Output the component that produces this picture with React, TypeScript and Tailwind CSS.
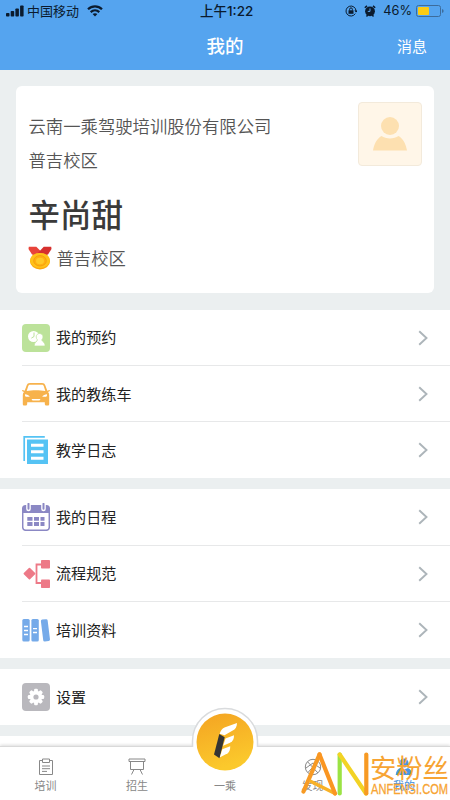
import type { ReactNode } from 'react';

interface MenuItem {
  label: string;
  icon: ReactNode;
}

const AppointmentIcon = () => (
  <svg className="w-7 h-7" viewBox="0 0 28 28">
    <rect width="28" height="28" rx="4" fill="#bce29a" />
    <circle cx="11.6" cy="12.500" r="5.6" fill="#fff" />
    <path d="M12 8.500v4l-2.600 1.600" fill="none" stroke="#bce29a" strokeWidth="1" />
    <path
      d="M17.500 9.500c2.200 0 3.500 1.500 3.500 3.500 0 1.200-.6 2.100-1.200 2.800.2 2 3.200 2 3.300 6.200H12.200c.1-4 3-4.200 3.200-6.200-.7-.7-1.200-1.600-1.200-2.800C14.200 11 15.400 9.500 17.500 9.500z"
      fill="#fff"
      stroke="#bce29a"
      strokeWidth="0.7"
    />
  </svg>
);

const CarIcon = () => (
  <svg className="w-7 h-7" viewBox="0 0 28 28">
    <path
      d="M8 3h12c1.800 0 2.800.8 3.400 2.500l1.900 5.300 2-.8c.6-.2.900.9.300 1.200l-1.600.9c.8.800 1.200 1.700 1.200 2.900v9c0 1-.6 1.500-1.500 1.500h-1.400c-.9 0-1.500-.6-1.500-1.500v-1.800H5.200V24c0 .9-.6 1.500-1.500 1.500H2.300c-.9 0-1.500-.5-1.500-1.500v-9c0-1.200.4-2.100 1.200-2.900l-1.600-.9c-.6-.3-.3-1.400.3-1.200l2 .8 1.900-5.300C5.200 3.800 6.200 3 8 3z"
      fill="#f7b24c"
    />
    <path d="M8.200 4.800h11.600c1 0 1.600.4 1.900 1.300l1.600 4.900c-5-.9-13.600-.9-18.600 0l1.600-4.900c.3-.9.900-1.300 1.900-1.300z" fill="#fff" />
    <path d="M3 14.200c2 .2 4 .9 4.800 2.600H4.500C3.300 16.800 2.800 15.600 3 14.200zM25 14.200c-2 .2-4 .9-4.800 2.600h3.300c1.200 0 1.700-1.200 1.500-2.600zM9.500 19h9l-1 1.500h-7z" fill="#fff" />
  </svg>
);

const LogIcon = () => (
  <svg className="w-7 h-7" viewBox="0 0 28 28">
    <path d="M2.200 25V.900h20.600" fill="none" stroke="#55c3f4" strokeWidth="1.700" />
    <rect x="5" y="3.500" width="21" height="25" fill="#55c3f4" />
    <path d="M9 9.200h12.500M9 15.700h12.500M9 22.300h12.500" stroke="#fff" strokeWidth="3" />
  </svg>
);

const CalendarIcon = () => (
  <svg className="w-7 h-7" viewBox="0 0 28 28">
    <rect x="0.700" y="2.700" width="26.600" height="24.600" rx="3" fill="#fff" stroke="#8b88c4" strokeWidth="1.500" />
    <path d="M1 10V5.500C1 3.500 2 2.500 4 2.500h20c2 0 3 1 3 3V10z" fill="#8b88c4" />
    <path d="M6.500 2v4M21.500 2v4" stroke="#fff" strokeWidth="4.600" strokeLinecap="round" />
    <path d="M6.500 .8v5M21.500 .8v5" stroke="#8b88c4" strokeWidth="2" strokeLinecap="round" />
    <path d="M5.300 15.800h5.200M12 15.800h5M18.500 15.800h4M5.300 21h5.200M12 21h5M18.500 21h4" stroke="#8b88c4" strokeWidth="3.800" />
  </svg>
);

const FlowIcon = () => (
  <svg className="w-7 h-7" viewBox="0 0 28 28">
    <rect x="3" y="9.200" width="8.800" height="8.800" rx="0.800" transform="rotate(45 7.400 13.700)" fill="#ed7987" />
    <path d="M19 4.500h-4.500V23H19" fill="none" stroke="#ed7987" strokeWidth="1.800" />
    <rect x="19" y="0" width="9" height="8.500" rx="0.800" fill="#ed7987" />
    <rect x="19" y="19.500" width="9" height="8.500" rx="0.800" fill="#ed7987" />
  </svg>
);

const BooksIcon = () => (
  <svg className="w-7 h-7" viewBox="0 0 28 28">
    <g fill="#75aae9">
      <rect x="0.300" y="3" width="7.400" height="22.500" rx="1.500" />
      <rect x="9.400" y="3" width="7.400" height="22.500" rx="1.500" />
      <rect x="20" y="3.300" width="6.800" height="22" rx="1.500" transform="rotate(-7 23.400 14)" />
    </g>
    <path d="M2 10.500h4M2 14.500h4M2 18.500h4M11 12.600h4M11 16.500h4" stroke="#fff" strokeWidth="1.300" />
  </svg>
);

const teeth = [0, 45, 90, 135, 180, 225, 270, 315];

const SettingsIcon = () => (
  <svg className="w-7 h-7" viewBox="0 0 28 28">
    <rect width="28" height="28" rx="4" fill="#b9b8bd" />
    <g fill="#fff">
      {teeth.map((angle) => (
        <rect key={angle} x="12.100" y="5.800" width="3.800" height="5" rx="1.200" transform={`rotate(${angle} 14 14)`} />
      ))}
      <circle cx="14" cy="14" r="6.200" />
    </g>
    <circle cx="14" cy="14" r="2.600" fill="#b9b8bd" />
  </svg>
);

const groups: MenuItem[][] = [
  [
    { label: '我的预约', icon: <AppointmentIcon /> },
    { label: '我的教练车', icon: <CarIcon /> },
    { label: '教学日志', icon: <LogIcon /> },
  ],
  [
    { label: '我的日程', icon: <CalendarIcon /> },
    { label: '流程规范', icon: <FlowIcon /> },
    { label: '培训资料', icon: <BooksIcon /> },
  ],
  [{ label: '设置', icon: <SettingsIcon /> }],
];

const StatusBar = () => (
  <div className="relative flex h-[22px] items-center justify-between pl-1.5 pr-1.5 text-[13px] text-[#0b1b2e]">
    <div className="flex items-center">
      <svg className="w-[18px] h-3 mr-[3px]" viewBox="0 0 18 12" fill="#0b1b2e">
        <rect x="0" y="8" width="3.500" height="3.500" rx="0.800" />
        <rect x="4.700" y="6" width="3.500" height="5.500" rx="0.800" />
        <rect x="9.400" y="3.500" width="3.500" height="8" rx="0.800" />
        <rect x="14.100" y="0.500" width="3.500" height="11" rx="0.800" />
      </svg>
      <span>中国移动</span>
      <svg className="w-4 h-3 ml-2" viewBox="0 0 16 12" fill="none" stroke="#0b1b2e" strokeWidth="2.200">
        <path d="M1 4.300c4-3.900 10-3.900 14 0M3.700 7.100c2.500-2.300 6.100-2.300 8.600 0" />
        <path d="M5.600 9.100c1.400-1.200 3.400-1.200 4.800 0L8 11.600z" fill="#0b1b2e" stroke="none" />
      </svg>
    </div>
    <span className="absolute left-[200px] whitespace-nowrap font-['Inter','Noto_Sans_CJK_SC',sans-serif] text-[13.500px] font-medium">上午1:22</span>
    <div className="flex items-center">
      <svg className="w-3 h-3" viewBox="0 0 12 12" fill="none" stroke="#0b1b2e">
        <path d="M10.300 8.600A5 5 0 1 1 11 6" />
        <path d="M9.300 5.500h3.200L11 7.600z" fill="#0b1b2e" stroke="none" />
        <rect x="3.500" y="5.300" width="5" height="3.500" fill="#0b1b2e" stroke="none" />
        <path d="M4.600 5.500V4.300a1.400 1.400 0 0 1 2.800 0v1.200" />
      </svg>
      <svg className="w-3 h-3 ml-[7px]" viewBox="0 0 12 12">
        <path d="M.8 2.800 3 .9M11.200 2.800 9 .9M2.500 11.500l1.300-1.600M9.500 11.500 8.200 9.900" stroke="#0b1b2e" strokeWidth="1.500" />
        <circle cx="6" cy="6.300" r="4.900" fill="#0b1b2e" />
        <path d="M6 3.400v3H3.800" fill="none" stroke="#55a4ef" />
      </svg>
      <span className="ml-[7px] font-['Inter',sans-serif] text-[12.800px]">46%</span>
      <svg className="w-7 h-3 ml-1" viewBox="0 0 28 12">
        <rect x="0.500" y="0.500" width="24" height="11" rx="2" fill="none" stroke="#3d6c9b" />
        <rect x="2" y="2" width="11" height="8" rx="0.800" fill="#fbcb13" />
        <path d="M26 4v4c1.200-.5 1.600-1.100 1.600-2S27.200 4.500 26 4z" fill="#3d6c9b" />
      </svg>
    </div>
  </div>
);

const Medal = () => (
  <svg className="-ml-px w-6 h-6" viewBox="0 0 24 24">
    <path d="M.8.800h7.500l4.500 4.500L9 10 4 8.500.5 3z" fill="#e8443a" />
    <path d="M23.200.800h-7.500L9.500 7.500 15 10l5-1.500L23.500 3z" fill="#d6302e" />
    <ellipse cx="12" cy="15.200" rx="10" ry="8.300" fill="#fba70d" />
    <ellipse cx="12" cy="14.400" rx="10" ry="7.500" fill="#ffc21a" />
    <ellipse cx="12" cy="14.800" rx="6.300" ry="5.200" fill="#ffb012" stroke="#f39b0b" strokeWidth="0.800" />
    <ellipse cx="12" cy="15" rx="4" ry="3.300" fill="#ffc928" />
  </svg>
);

const ProfileCard = () => (
  <div className="mx-4 mt-4 flex h-[207px] justify-between rounded-md bg-white pl-[12.500px] pr-3 pt-4">
    <div className="pt-[11px] text-[17.350px] font-[350] leading-[26px] text-[#555]">
      <p>云南一乘驾驶培训股份有限公司</p>
      <p className="mt-2">普吉校区</p>
      <h1 className="mt-[18px] text-[31.500px] font-medium leading-[44px] text-[#3a3a3a]">辛尚甜</h1>
      <div className="mt-2.5 flex items-center">
        <Medal />
        <span className="ml-[5px]">普吉校区</span>
      </div>
    </div>
    <div className="flex h-16 w-16 justify-center rounded border border-[#f3eadb] bg-[#fff6e8] pt-3.5">
      <svg className="w-[34px] h-[34px]" viewBox="0 0 34 34" fill="#fde0b0">
        <circle cx="17" cy="9" r="9" />
        <path d="M8.500 19c4.500 3.200 12.500 3.200 17 0 4.500 2.500 7.500 8 8.500 14.600H0C1 27 4 21.500 8.500 19z" />
      </svg>
    </div>
  </div>
);

const MenuGroup = ({ items }: { items: MenuItem[] }) => (
  <div className="bg-white">
    {items.map((item, i) => (
      <div key={item.label} className="flex h-[56.250px] items-center pl-[22px]">
        {item.icon}
        <div
          className={`ml-1.5 flex h-full flex-1 items-center justify-between pr-[22px] ${
            i > 0 ? 'relative before:absolute before:-top-px before:-left-[34px] before:right-0 before:h-px before:bg-[#e7e8e9]' : ''
          }`}
        >
          <span className="-mt-0.5 text-[15.100px] text-[#222]">{item.label}</span>
          <svg className="w-2.5 h-4" viewBox="0 0 10 16" fill="none" stroke="#adb5ba" strokeWidth="1.900">
            <path d="M1.200 1.200 8.500 8l-7.300 6.800" />
          </svg>
        </div>
      </div>
    ))}
  </div>
);

const TabBar = () => (
  <div className="absolute bottom-0 left-0 right-0 flex h-[54px] border-t border-[#d9d9d9] bg-white text-[11px] leading-4 text-[#888] shadow-[0_-1px_3px_rgba(0,0,0,0.14)]">
    <div className="flex w-[91px] flex-col items-center pt-[11px]">
      <svg className="w-[18px] h-[18px]" viewBox="0 0 18 18" fill="none" stroke="#888">
        <path d="M5.500 2.500h-3v14h13v-14h-3M5.500 1h7v3.500h-7zM5 8h8M5 10.700h8M5 13.400h5" />
      </svg>
      <span className="mt-px">培训</span>
    </div>
    <div className="flex w-[92px] flex-col items-center pt-[11px]">
      <svg className="w-[18px] h-[18px]" viewBox="0 0 18 18" fill="none" stroke="#888">
        <path d="M1 1h16v2.500H1zM2.500 3.500v8h13v-8M6 11.500l-2.500 5M12 11.500l2.500 5" />
      </svg>
      <span className="mt-px">招生</span>
    </div>
    <div className="relative flex w-[84px] flex-col items-center">
      <svg className="absolute -top-[40px] left-1/2 h-[68px] w-[68px] -translate-x-1/2" viewBox="0 0 68 68">
        <defs>
          <linearGradient id="badge" x1="0" y1="0" x2="0.300" y2="1">
            <stop offset="0" stopColor="#f4a322" />
            <stop offset="1" stopColor="#fbc92c" />
          </linearGradient>
        </defs>
        <path d="M1.500 40V34a32.500 32.500 0 0 1 65 0v6" fill="#fff" stroke="#d9dbdd" strokeWidth="1.500" />
        <circle cx="34" cy="35" r="28.500" fill="url(#badge)" />
        <path d="M28.300 27l5.400 3.300-5.200 21-5.500-3.800z" fill="#343434" />
        <path d="M28.700 26.800c.8-3 2.300-5 4.800-6.300L46 16c-.1 3.500-1.300 6.300-4.700 7.700l-7.800 4.600z" fill="#fff" />
        <path d="M34.500 31.500l8.500-3.200c.1 3.500-1 6-4 7.400l-6.900 3z" fill="#fff" />
        <path d="M31.300 42.300l7.900-3c.1 3-.7 5.500-2.500 7l-8 4.200z" fill="#fff" />
      </svg>
      <span className="mt-[30px]">一乘</span>
    </div>
    <div className="flex w-[91px] flex-col items-center pt-[11px]">
      <svg className="w-[18px] h-[18px]" viewBox="0 0 18 18" fill="none" stroke="#888">
        <circle cx="9" cy="9" r="7.700" />
        <path d="M3.500 3.700 14 15M14 3 4 14.500M2 10l7-5 7 5" />
      </svg>
      <span className="mt-px">发现</span>
    </div>
    <div className="flex w-[92px] flex-col items-center pt-[11px] text-[#3f8edb]">
      <svg className="w-[18px] h-[18px]" viewBox="0 0 18 18" fill="#4b96df">
        <circle cx="9" cy="5" r="4.500" />
        <path d="M5 10c2.500 1.500 5.500 1.500 8 0 2.500 1 4 3.500 4.300 7H.7C1 13.500 2.500 11 5 10z" />
      </svg>
      <span className="mt-px">我的</span>
    </div>
  </div>
);

const Watermark = () => (
  <div className="absolute bottom-0 right-0 flex h-[50px] w-[150px] text-[#f7a433]">
    <svg className="h-[50px] w-[70px] shrink-0" viewBox="0 0 70 50" fill="none" strokeWidth="4.200" strokeLinecap="round">
      <path d="M3.500 41.500 19.500 4.500" stroke="#f79a24" />
      <path d="M11 31.500l24 12" stroke="#f8b127" strokeWidth="3.600" />
      <path d="M19.500 4.500l15.500 39" stroke="#fa9622" />
      <path d="M39.700 43.500v-39" stroke="#9be344" />
      <path d="M39.700 4.500 66 43.500" stroke="#f2d325" />
      <path d="M66.300 43.500v-39" stroke="#f79a24" />
    </svg>
    <div className="flex flex-col pt-[3px]">
      <span className="whitespace-nowrap text-[26.300px] leading-[28px]">安粉丝</span>
      <svg className="h-[18px] w-[79px] overflow-visible" viewBox="0 0 79 18">
        <text
          x="1"
          y="13"
          textLength="77"
          lengthAdjust="spacingAndGlyphs"
          className="fill-[#f7a433] stroke-[#f7a433] stroke-[0.3px] font-['Liberation_Sans',sans-serif] text-[14px]"
        >
          ANFENSI.COM
        </text>
      </svg>
    </div>
  </div>
);

export default function App() {
  return (
    <div className="relative h-[800px] w-[450px] overflow-hidden bg-[#ebeff0] font-['Noto_Sans_CJK_SC',sans-serif]">
      <header className="h-[70px] bg-[#55a4ef]">
        <StatusBar />
        <div className="relative flex h-12 items-center justify-center text-white">
          <span className="text-[18.500px] font-medium">我的</span>
          <span className="absolute right-[23px] text-[15px]">消息</span>
        </div>
      </header>
      <ProfileCard />
      <div className="mt-[16.500px] flex flex-col gap-[11px]">
        {groups.map((items, i) => (
          <MenuGroup key={i} items={items} />
        ))}
        <div className="h-16 bg-white" />
      </div>
      <TabBar />
      <Watermark />
    </div>
  );
}
